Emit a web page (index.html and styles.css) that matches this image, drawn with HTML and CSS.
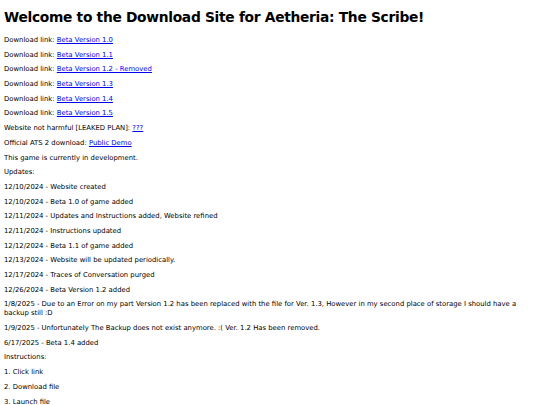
FILE: index.html
```html
<!DOCTYPE html>
<html lang="en">
<head>
<meta charset="utf-8">
<title>Aetheria: The Scribe</title>
<link rel="stylesheet" href="styles.css">
</head>
<body>
<h1 class="title">Welcome to the Download Site for Aetheria: The Scribe!</h1>
<p class="line">Download link: <a href="#">Beta Version 1.0</a></p>
<p class="line">Download link: <a href="#">Beta Version 1.1</a></p>
<p class="line">Download link: <a href="#">Beta Version 1.2 - Removed</a></p>
<p class="line">Download link: <a href="#">Beta Version 1.3</a></p>
<p class="line">Download link: <a href="#">Beta Version 1.4</a></p>
<p class="line">Download link: <a href="#">Beta Version 1.5</a></p>
<p class="line">Website not harmful [LEAKED PLAN]: <a href="#">???</a></p>
<p class="line">Official ATS 2 download: <a href="#">Public Demo</a></p>
<p class="line">This game is currently in development.</p>
<p class="line">Updates:</p>
<p class="line">12/10/2024 - Website created</p>
<p class="line">12/10/2024 - Beta 1.0 of game added</p>
<p class="line">12/11/2024 - Updates and Instructions added, Website refined</p>
<p class="line">12/11/2024 - Instructions updated</p>
<p class="line">12/12/2024 - Beta 1.1 of game added</p>
<p class="line">12/13/2024 - Website will be updated periodically.</p>
<p class="line">12/17/2024 - Traces of Conversation purged</p>
<p class="line">12/26/2024 - Beta Version 1.2 added</p>
<p class="line">1/8/2025 - Due to an Error on my part Version 1.2 has been replaced with the file for Ver. 1.3, However in my second place of storage I should have a backup still :D</p>
<p class="line">1/9/2025 - Unfortunately The Backup does not exist anymore. :( Ver. 1.2 Has been removed.</p>
<p class="line">6/17/2025 - Beta 1.4 added</p>
<p class="line">Instructions:</p>
<p class="line">1. Click link</p>
<p class="line">2. Download file</p>
<p class="line">3. Launch file</p>
</body>
</html>
```
FILE: styles.css
```css
html, body {
  background: #ffffff;
}
body {
  margin: 4px;
  font-family: "DejaVu Sans", Verdana, sans-serif;
  font-size: 6.85px;
  color: #000000;
}
.title {
  font-family: "DejaVu Sans", Verdana, sans-serif;
  font-size: 13.8px;
  font-weight: bold;
  letter-spacing: -0.3px;
  margin: 5px 0 10px;
  line-height: 17px;
}
.line {
  margin: 5.7px 0;
  line-height: 9px;
}
a {
  color: #0000ee;
  text-decoration: underline;
}
```
